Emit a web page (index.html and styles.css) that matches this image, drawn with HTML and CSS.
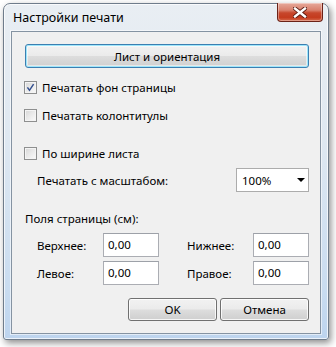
FILE: index.html
```html
<!DOCTYPE html>
<html lang="ru">
<head>
<meta charset="utf-8">
<link rel="stylesheet" href="styles.css">
</head>
<body>
<div class="window">
  <div class="titlebar">
    <span class="title">Настройки печати</span>
    <div class="close">
      <svg width="14" height="11" viewBox="0 0 14 11">
        <path d="M2 1.5 L12 9.5 M12 1.5 L2 9.5" stroke="#5a1a10" stroke-width="4.2" stroke-linecap="square"/>
        <path d="M2 1.5 L12 9.5 M12 1.5 L2 9.5" stroke="#ffffff" stroke-width="2.4" stroke-linecap="square"/>
      </svg>
    </div>
  </div>
  <div class="client">
    <button class="btn btn-wide">Лист и ориентация</button>

    <label class="check r1"><span class="box"><svg width="11" height="11" viewBox="0 0 11 11"><path d="M2.4 5.4 L4.5 8.3 L8.6 2.2" fill="none" stroke="#34508f" stroke-width="1.5"/></svg></span>Печатать фон страницы</label>
    <label class="check r2"><span class="box"></span>Печатать колонтитулы</label>
    <label class="check r3"><span class="box"></span>По ширине листа</label>

    <div class="scale-row">
      <span>Печатать с масштабом:</span>
      <div class="select"><span>100%</span><span class="arrow"></span></div>
    </div>

    <div class="section">Поля страницы (см):</div>

    <div class="margins">
      <span class="lbl">Верхнее:</span><div class="field">0,00</div><span></span>
      <span class="lbl">Нижнее:</span><div class="field">0,00</div>
      <span class="lbl">Левое:</span><div class="field">0,00</div><span></span>
      <span class="lbl">Правое:</span><div class="field">0,00</div>
    </div>

    <div class="actions">
      <button class="btn btn-act">OK</button>
      <button class="btn btn-act">Отмена</button>
    </div>
  </div>
</div>
</body>
</html>
```

FILE: styles.css
```css
html, body {
  margin: 0;
  padding: 0;
  background: #ffffff;
}
body {
  font-family: "Noto Sans", "Open Sans", sans-serif;
  font-size: 11.5px;
  color: #1a1a1a;
  width: 336px;
  height: 347px;
  overflow: hidden;
}
.window {
  box-sizing: border-box;
  margin: 3px 0 0 3px;
  width: 326px;
  height: 337px;
  border: 1px solid #6f7c8b;
  border-radius: 7px 7px 3px 3px;
  background: linear-gradient(180deg, #e9eef3 0%, #dfe8f1 40%, #c9dcf0 85%, #bdd4ee 100%);
  box-shadow: inset 0 0 0 1px rgba(255,255,255,0.7), 2px 3px 7px rgba(0,0,0,0.45);
  padding: 0 7px 5px 7px;
  display: flex;
  flex-direction: column;
}
.titlebar {
  height: 27px;
  display: flex;
  justify-content: space-between;
  align-items: flex-start;
  margin: 0 -2px 0 -7px;
  padding-left: 9px;
}
.title {
  line-height: 27px;
  color: #000;
  font-size: 12.5px;
}
.close {
  box-sizing: border-box;
  width: 46px;
  height: 19px;
  margin-top: -1px;
  border: 1px solid #6b2218;
  border-top: none;
  border-radius: 0 0 4px 4px;
  background: linear-gradient(180deg, #e6a99b 0%, #d9806c 40%, #c7472c 55%, #c43b1e 80%, #d66a4c 100%);
  box-shadow: inset 0 0 0 1px rgba(255,255,255,0.35);
  display: flex;
  align-items: center;
  justify-content: center;
}
.close svg { display: block; }
.client {
  box-sizing: border-box;
  height: 303px;
  border: 1px solid #8593a2;
  box-shadow: 0 0 0 1px rgba(255,255,255,0.55);
  background: #f0f0f0;
  padding: 12px 11px 0 13px;
  display: flex;
  flex-direction: column;
}
.btn {
  box-sizing: border-box;
  font: inherit;
  color: #000;
  border: 1px solid #707070;
  border-radius: 3px;
  background: linear-gradient(180deg, #f2f2f2 0%, #ebebeb 48%, #dddddd 52%, #cfcfcf 100%);
  box-shadow: inset 0 0 0 1px rgba(255,255,255,0.8);
  padding: 0;
  margin: 0;
}
.btn-wide {
  height: 24px;
  width: 284px;
  border-color: #3c7fb1;
  box-shadow: inset 0 0 0 1px #9ee6fb, inset 0 0 0 2px rgba(255,255,255,0.5);
}
.check {
  display: flex;
  align-items: center;
  height: 16px;
  margin-left: -1px;
  color: #000;
}
.r1 { margin-top: 11px; }
.r2 { margin-top: 12px; }
.r3 { margin-top: 22px; }
.box {
  box-sizing: border-box;
  width: 13px;
  height: 13px;
  border: 1px solid #8e8f8f;
  background: linear-gradient(135deg, #d6d6d6 0%, #eaeaea 50%, #fbfbfb 100%);
  box-shadow: inset 0 0 0 1px #f4f4f4;
  margin-right: 5px;
  display: flex;
  align-items: center;
  justify-content: center;
}
.box svg { display: block; }
.scale-row {
  margin-top: 7px;
  height: 24px;
  display: flex;
  align-items: center;
  justify-content: space-between;
  padding-left: 12px;
  color: #000;
}
.select {
  box-sizing: border-box;
  width: 73px;
  height: 24px;
  border: 1px solid #acacac;
  background: #fff;
  display: flex;
  align-items: center;
  justify-content: space-between;
  padding: 0 3px 0 5px;
}
.arrow {
  width: 0;
  height: 0;
  border-left: 4px solid transparent;
  border-right: 4px solid transparent;
  border-top: 4px solid #000;
}
.section {
  margin-top: 19px;
  height: 16px;
  line-height: 16px;
  color: #000;
}
.margins {
  margin-top: 6px;
  padding-left: 12px;
  display: grid;
  grid-template-columns: 66px 56px 28px 66px 56px;
  grid-auto-rows: 24px;
  row-gap: 4px;
  align-items: center;
  color: #000;
}
.field {
  box-sizing: border-box;
  height: 24px;
  border: 1px solid #abadb3;
  border-top-color: #9da1a8;
  background: #fff;
  padding-left: 4px;
  line-height: 22px;
}
.actions {
  margin-top: 13px;
  display: flex;
  justify-content: flex-end;
  gap: 3px;
}
.btn-act {
  width: 89px;
  height: 23px;
}
```
